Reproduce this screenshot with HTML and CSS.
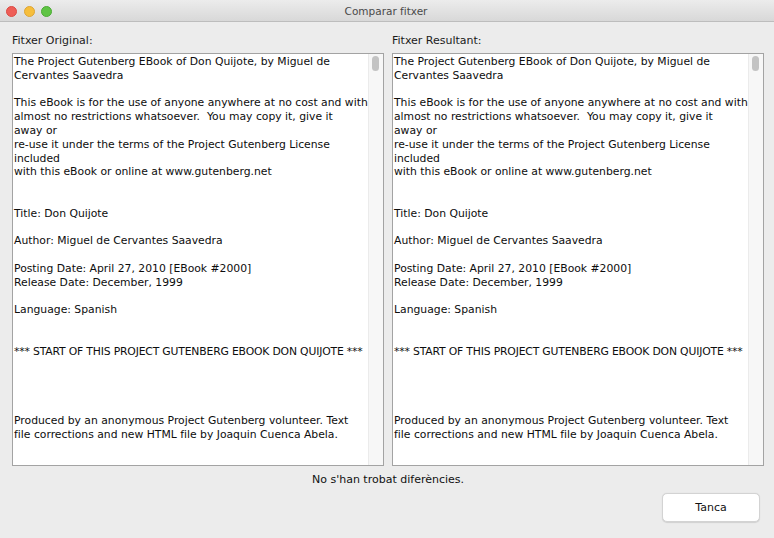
FILE: index.html
```html
<!DOCTYPE html>
<html lang="ca">
<head>
<meta charset="utf-8">
<title>Comparar fitxer</title>
<link rel="stylesheet" href="styles.css">
</head>
<body>
<div class="window">
  <div class="titlebar">
    <div class="lights">
      <span class="light red"></span>
      <span class="light yellow"></span>
      <span class="light green"></span>
    </div>
    <div class="title">Comparar fitxer</div>
  </div>
  <div class="content">
    <div class="panes">
      <div class="pane">
        <div class="label">Fitxer Original:</div>
        <div class="box">
          <div class="text">The Project Gutenberg EBook of Don Quijote, by Miguel de
Cervantes Saavedra

This eBook is for the use of anyone anywhere at no cost and with
almost no restrictions whatsoever.  You may copy it, give it
away or
re-use it under the terms of the Project Gutenberg License
included
with this eBook or online at www.gutenberg.net


Title: Don Quijote

Author: Miguel de Cervantes Saavedra

Posting Date: April 27, 2010 [EBook #2000]
Release Date: December, 1999

Language: Spanish


<span class="caps">*** START OF THIS PROJECT GUTENBERG EBOOK DON QUIJOTE ***</span>




Produced by an anonymous Project Gutenberg volunteer. Text
file corrections and new HTML file by Joaquin Cuenca Abela.</div>
          <div class="scrollbar"><div class="thumb"></div></div>
        </div>
      </div>
      <div class="pane">
        <div class="label">Fitxer Resultant:</div>
        <div class="box">
          <div class="text">The Project Gutenberg EBook of Don Quijote, by Miguel de
Cervantes Saavedra

This eBook is for the use of anyone anywhere at no cost and with
almost no restrictions whatsoever.  You may copy it, give it
away or
re-use it under the terms of the Project Gutenberg License
included
with this eBook or online at www.gutenberg.net


Title: Don Quijote

Author: Miguel de Cervantes Saavedra

Posting Date: April 27, 2010 [EBook #2000]
Release Date: December, 1999

Language: Spanish


<span class="caps">*** START OF THIS PROJECT GUTENBERG EBOOK DON QUIJOTE ***</span>




Produced by an anonymous Project Gutenberg volunteer. Text
file corrections and new HTML file by Joaquin Cuenca Abela.</div>
          <div class="scrollbar"><div class="thumb"></div></div>
        </div>
      </div>
    </div>
    <div class="status">No s'han trobat diferències.</div>
    <div class="actions">
      <button class="btn" type="button">Tanca</button>
    </div>
  </div>
</div>
</body>
</html>
```
FILE: styles.css
```css
html, body {
  margin: 0;
  padding: 0;
}
body {
  width: 774px;
  height: 538px;
  background: #ececec;
  font-family: "DejaVu Sans", "Liberation Sans", sans-serif;
  font-size: 11px;
  color: #111;
  overflow: hidden;
}
.window {
  width: 774px;
  height: 538px;
  display: flex;
  flex-direction: column;
}
.titlebar {
  height: 22px;
  box-sizing: border-box;
  background: linear-gradient(#ececec, #d8d8d8);
  border-bottom: 1px solid #bdbdbd;
  display: flex;
  align-items: center;
}
.lights {
  display: flex;
  gap: 6.5px;
  padding-left: 6px;
  padding-top: 2px;
}
.light {
  width: 11px;
  height: 11px;
  border-radius: 50%;
  display: block;
  box-sizing: border-box;
}
.red { background: #ee5e57; border: 0.5px solid #dc4a43; }
.yellow { background: #f6be3c; border: 0.5px solid #dea534; }
.green { background: #5fc444; border: 0.5px solid #4bab34; }
.title {
  flex: 1;
  text-align: center;
  font-size: 10.5px;
  color: #4a4a4a;
  margin-right: 54px;
}
.content {
  flex: 1;
  display: flex;
  flex-direction: column;
  padding: 0 10px 0 12px;
}
.panes {
  display: flex;
  gap: 8px;
}
.pane {
  width: 372px;
  display: flex;
  flex-direction: column;
}
.label {
  height: 31px;
  box-sizing: border-box;
  padding-top: 12px;
  line-height: 14px;
  color: #1b1b1b;
}
.box {
  height: 413px;
  box-sizing: border-box;
  border: 1px solid #a3a3a3;
  background: #fff;
  display: flex;
  overflow: hidden;
}
.text {
  flex: 1;
  white-space: pre;
  font-size: 10.8px;
  line-height: 13.8px;
  padding: 1px 0 0 1px;
  overflow: hidden;
  color: #0d0d0d;
}
.caps {
  letter-spacing: -0.17px;
}
.scrollbar {
  width: 14px;
  background: #f7f7f7;
  border-left: 1px solid #ebebeb;
  position: relative;
}
.thumb {
  position: absolute;
  top: 2px;
  left: 3px;
  width: 7px;
  height: 15px;
  border-radius: 4px;
  background: #c3c3c3;
}
.status {
  text-align: center;
  line-height: 14px;
  padding-top: 7px;
  height: 27px;
  box-sizing: border-box;
  color: #111;
}
.actions {
  display: flex;
  justify-content: flex-end;
  padding-right: 4px;
}
.btn {
  width: 98px;
  height: 29px;
  border: 1px solid #d3d3d3;
  border-radius: 5px;
  background: #fff;
  font-family: inherit;
  font-size: 11px;
  color: #111;
  box-shadow: 0 0.5px 1px rgba(0,0,0,0.12);
}
```
